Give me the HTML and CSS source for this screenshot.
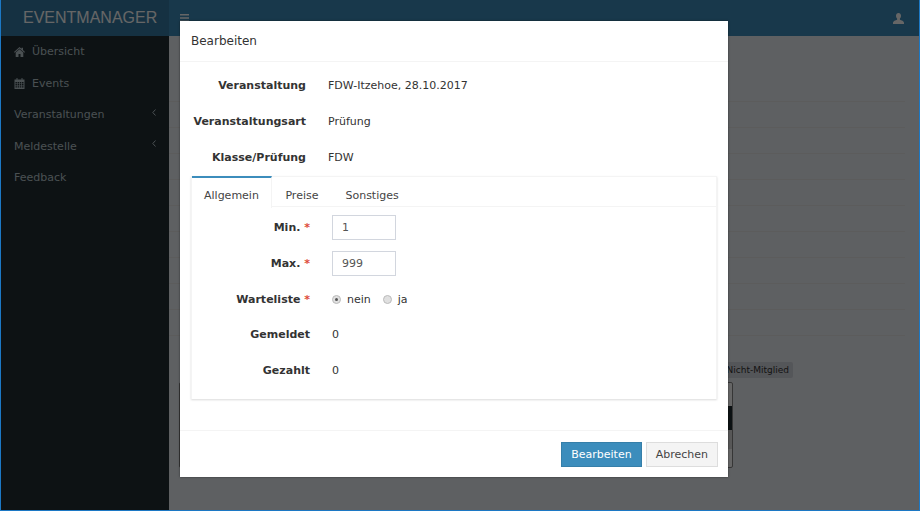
FILE: index.html
```html
<!DOCTYPE html>
<html lang="de">
<head>
<meta charset="utf-8">
<title>Eventmanager</title>
<link rel="stylesheet" href="styles.css">
</head>
<body>
<div class="app">
  <header class="topbar">
    <div class="brand">EVENTMANAGER</div>
    <div class="topbar-main">
      <svg class="burger" width="9" height="8" viewBox="0 0 9 8"><path d="M0 0h9v1.6H0zM0 3.2h9v1.6H0zM0 6.4h9V8H0z"/></svg>
      <svg class="user" width="11" height="11" viewBox="0 0 11 11"><path d="M5.5 0C7 0 8 1.1 8 2.8c0 1.2-.5 2.2-1.1 2.8v1.1c1.500.6 4.100 1 4.100 3.300V11H0v-1c0-2.300 2.600-2.700 4.100-3.300V5.600C3.500 5 3 4 3 2.800 3 1.100 4 0 5.500 0z"/></svg>
    </div>
  </header>
  <div class="below">
    <nav class="sidebar">
      <a class="nav-item"><svg class="nav-icon" width="11" height="10" viewBox="0 0 11 10"><path d="M5.500 0l2 1.800V.8h1.500v2.300L11 5l-.6.700-4.900-4.300L.6 5.700 0 5zM1.700 5.500l3.800-3.300 3.800 3.300V10H6.500V7h-2v3H1.700z"/></svg><span class="nav-label">Übersicht</span></a>
      <a class="nav-item"><svg class="nav-icon" width="10" height="11" viewBox="0 0 10 11"><path d="M0 1.500h2V0h1v1.500h4V0h1v1.500h2V11H0zM1 4v1.400h1.400V4zm2.100 0v1.400h1.400V4zm2.100 0v1.400h1.400V4zm2.100 0v1.400H9V4zM1 6.100v1.400h1.400V6.100zm2.100 0v1.400h1.400V6.100zm2.100 0v1.400h1.400V6.100zm2.100 0v1.400H9V6.100zM1 8.200v1.400h1.400V8.200zm2.100 0v1.400h1.400V8.200zm2.100 0v1.400h1.400V8.200zm2.100 0v1.400H9V8.200z" fill-rule="evenodd"/></svg><span class="nav-label">Events</span></a>
      <a class="nav-item nav-sub"><span>Veranstaltungen</span><svg class="chev" width="4" height="7" viewBox="0 0 4 7"><path d="M3.500.5L.8 3.500l2.700 3" fill="none" stroke-width="1"/></svg></a>
      <a class="nav-item nav-sub"><span>Meldestelle</span><svg class="chev" width="4" height="7" viewBox="0 0 4 7"><path d="M3.500.5L.8 3.500l2.700 3" fill="none" stroke-width="1"/></svg></a>
      <a class="nav-item">Feedback</a>
    </nav>
    <main class="content">
      <div class="rule"></div>
      <div class="rule"></div>
      <div class="rule"></div>
      <div class="rule"></div>
      <div class="rule"></div>
      <div class="rule"></div>
      <div class="rule"></div>
      <div class="rule"></div>
      <div class="rule"></div>
      <div class="rule"></div>
      <div class="chips"><span class="chip">Nicht-Mitglied</span></div>
      <div class="bg-table">
        <div class="bg-head"></div>
        <div class="bg-row"></div>
        <div class="bg-foot"></div>
      </div>
    </main>
  </div>
  <div class="backdrop"></div>
  <section class="modal">
    <h2 class="modal-title">Bearbeiten</h2>
    <div class="modal-body">
      <dl class="info">
        <div class="info-row"><dt>Veranstaltung</dt><dd>FDW-Itzehoe, 28.10.2017</dd></div>
        <div class="info-row"><dt>Veranstaltungsart</dt><dd>Prüfung</dd></div>
        <div class="info-row"><dt>Klasse/Prüfung</dt><dd>FDW</dd></div>
      </dl>
      <div class="tabs">
        <div class="tab-bar">
          <span class="tab tab-active">Allgemein</span>
          <span class="tab">Preise</span>
          <span class="tab">Sonstiges</span>
        </div>
        <div class="tab-pane">
          <div class="field field-input"><label>Min. <em>*</em></label><input class="text" type="text" value="1"></div>
          <div class="field field-input"><label>Max. <em>*</em></label><input class="text" type="text" value="999"></div>
          <div class="field field-radio"><label>Warteliste <em>*</em></label>
            <span class="radio radio-on"></span><span class="radio-label">nein</span>
            <span class="radio"></span><span class="radio-label">ja</span>
          </div>
          <div class="field field-static"><label>Gemeldet</label><span>0</span></div>
          <div class="field field-static"><label>Gezahlt</label><span>0</span></div>
        </div>
      </div>
    </div>
    <footer class="modal-foot">
      <button class="btn btn-primary">Bearbeiten</button>
      <button class="btn">Abrechen</button>
    </footer>
  </section>
</div>
</body>
</html>
```
FILE: styles.css
```css
* { box-sizing: border-box; }
html, body { margin: 0; height: 100%; }
body { overflow: hidden; font-family: "DejaVu Sans", sans-serif; font-size: 11px; color: #333; }
.app { position: relative; width: 920px; height: 511px; border: 1px solid #1c78c4; border-width: 0 1px 1px; display: flex; flex-direction: column; background: #ecf0f5; overflow: hidden; }
.topbar { display: flex; height: 36px; flex: none; background: #367fa9; }
.brand { width: 168px; background: #357ca5; color: #fff; font: 16px/35px "Liberation Sans", sans-serif; padding-left: 22px; }
.topbar-main { flex: 1; display: flex; justify-content: space-between; align-items: center; padding: 0 16px 0 11px; background: #3c8dbc; fill: #fff; margin-right: -1px; }
.below { flex: 1; display: flex; min-height: 0; }
.sidebar { width: 168px; flex: none; background: #222d32; padding-top: 0; }
.nav-item { display: flex; align-items: center; height: 31.500px; padding-left: 13px; padding-right: 13px; color: #b8c7ce; fill: #b8c7ce; stroke: #b8c7ce; }
.nav-item svg { stroke: none; }
.nav-sub .chev { stroke: #b8c7ce; margin-left: auto; margin-top: -5px; }
.nav-icon { width: 11px; margin-right: 7px; }
.content { flex: 1; padding: 40px 0 0 0; position: relative; }
.rule { height: 26px; border-bottom: 1px solid #e6e6e6; margin-right: 14px; }
.chips { display: flex; justify-content: flex-end; margin: 26px 126px 0 0; }
.chip { background: #d2d6de; padding: 3px 4px 3px 19px; border-radius: 2px; font-size: 9px; white-space: nowrap; }
.bg-table { margin: 4px 186px 0 10px; height: 86px; border: 1px solid #888; border-radius: 2px; background: #fff; display: flex; flex-direction: column; }
.bg-head { height: 24px; margin-top: 23px; background: #222d32; }
.bg-row { height: 19px; background: #ddd; }
.bg-foot { flex: 1; }
.backdrop { position: absolute; inset: 0 0 0 0; background: rgba(0,0,0,.6); }
.modal { position: absolute; left: 179px; top: 21px; width: 548px; height: 456px; background: #fff; box-shadow: 0 0 2px rgba(0,0,0,.5); display: flex; flex-direction: column; }
.modal-title { margin: 0; height: 41px; flex: none; padding: 0 11px; font-size: 12px; font-weight: 400; line-height: 41px; border-bottom: 1px solid #f4f4f4; color: #333; }
.modal-body { flex: 1; padding: 0 11px; }
.info { margin: 0; padding-top: 5px; }
.info-row { display: flex; height: 36px; align-items: center; }
.info dt { width: 115px; text-align: right; font-weight: 700; }
.info dd { margin: 0 0 0 22px; }
.tabs { margin-top: 1px; box-shadow: 0 1px 2px rgba(0,0,0,.15); border-top: 1px solid #f4f4f4; height: 223px; border-left: 1px solid #f4f4f4; border-right: 1px solid #f4f4f4; }
.tab-bar { display: flex; height: 31px; border-bottom: 1px solid #f4f4f4; margin-top: -1px; }
.tab { padding: 0 13.500px; line-height: 35px; color: #444; border-top: 2px solid transparent; }
.tab-active { border-top-color: #3c8dbc; border-right: 1px solid #f4f4f4; padding: 0 12px; background: #fff; height: 32px; }
.field { display: flex; align-items: center; }
.field label { width: 118px; text-align: right; font-weight: 700; margin-right: 22px; }
.field em { color: #dd4b39; font-style: normal; }
.field-input { height: 36px; }
.tab-pane { padding-top: 2px; }
.text { width: 64px; height: 25px; border: 1px solid #d2d6de; padding: 0 9px; font: 11px "DejaVu Sans", sans-serif; color: #555; outline: none; }
.field-radio { height: 36px; }
.radio { width: 9px; height: 9px; border-radius: 50%; background: #e0e0e0; border: 1px solid #bbb; position: relative; }
.radio-on::after { content: ""; position: absolute; left: 2px; top: 2px; width: 3px; height: 3px; border-radius: 50%; background: #555; }
.radio-label { margin: 0 12px 0 6px; }
.field-static { height: 35.500px; }
.modal-foot { flex: none; height: 47px; border-top: 1px solid #f4f4f4; padding: 11px 10px 0; display: flex; justify-content: flex-end; gap: 4px; }
.btn { height: 25px; padding: 0 9px; border: 1px solid #ddd; background: #f4f4f4; color: #444; font: 11px "DejaVu Sans", sans-serif; }
.btn-primary { background: #3c8dbc; border-color: #367fa9; color: #fff; }
```
